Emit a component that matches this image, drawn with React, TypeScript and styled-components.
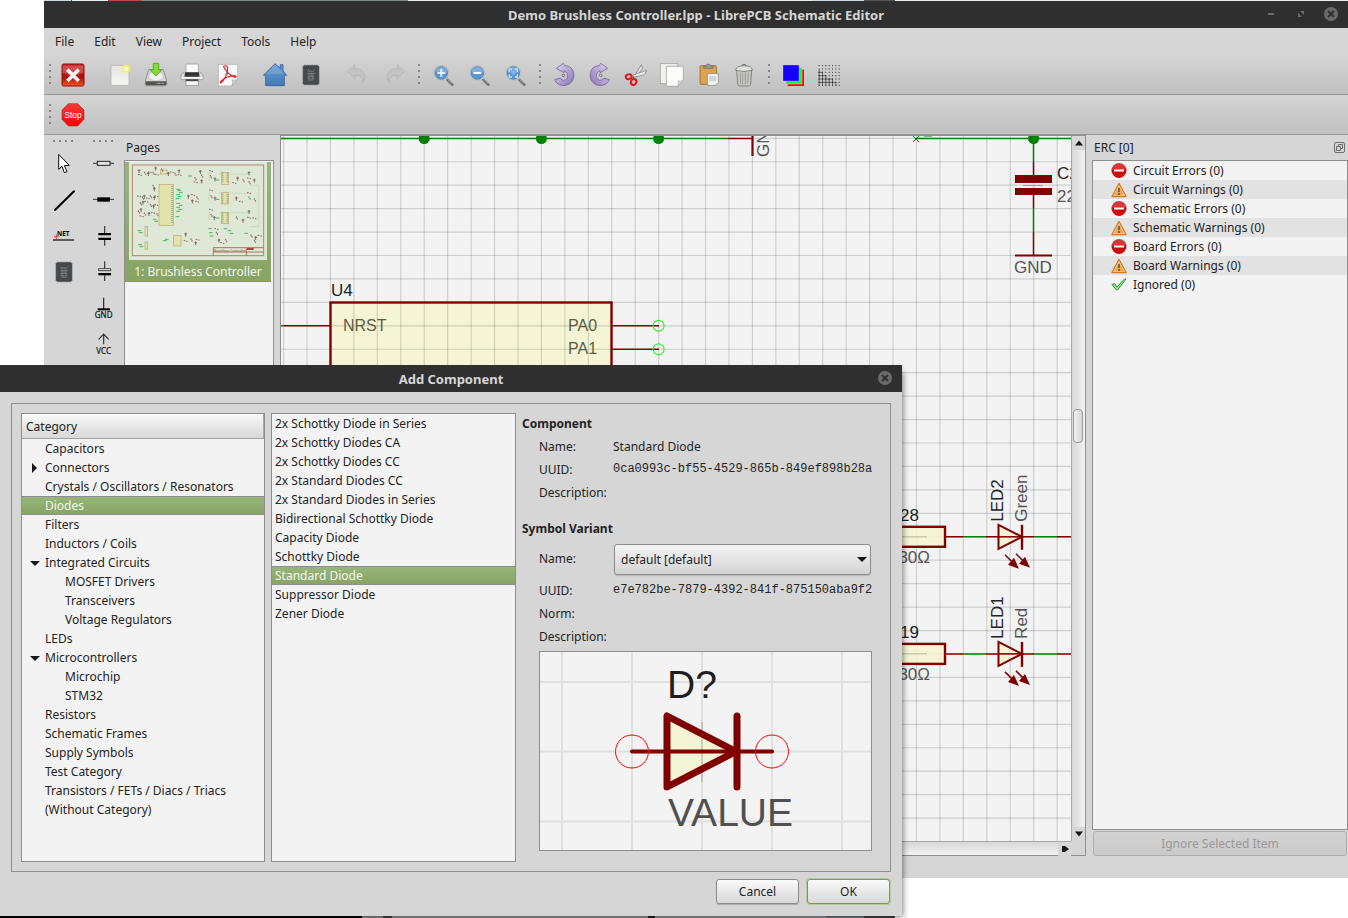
import React from "react";
import styled, { createGlobalStyle, css } from "styled-components";

const GlobalStyle = createGlobalStyle`
  * { box-sizing: border-box; }
  body {
    margin: 0;
    background: #ffffff;
    color: #232323;
    font-family: "Noto Sans", sans-serif;
    font-size: 12px;
    line-height: 19px;
  }
  button, select { font: inherit; color: inherit; }
  ul, ol, dl, dd, h1, h2, h3 { margin: 0; padding: 0; list-style: none; font-size: inherit; }
`;

const line = "#8e8e8e";
const face = "#d6d6d6";
const base = "#f3f3f3";
const maroon = "#800000";
const wire = "#008000";

const selected = css`
  color: #f4f8ee;
  background: linear-gradient(#98b67c, #87a465);
`;

/* ---------- desktop and windows ---------- */

const Desktop = styled.div`
  position: relative;
  min-height: 100vh;
  display: flex;
  flex-direction: column;
  overflow: hidden;
`;

const TopStrip = styled.div`
  height: 1px;
  margin-left: 44px;
  background: linear-gradient(90deg, #c9dbe0 0 27px, #1f5d73 27px 28px, #e8efee 28px 64px, #b05050 64px 98px, #7d8786 98px 364px, #e8efee 364px 768px, #c9dbe0 768px 820px, #555 820px 851px, #e8efee 851px);
`;

const BottomStrip = styled.div`
  position: absolute;
  left: 0;
  bottom: 0;
  width: 895px;
  height: 2px;
  background: linear-gradient(90deg, #000 0 362px, #8b8b8b 362px 383px, #444 383px 392px, #999 392px 648px, #222 648px 655px, #999 655px 826px, #6d7b85 826px 864px, #444 864px);
`;

const MainWindow = styled.main`
  flex: 1;
  display: flex;
  flex-direction: column;
  margin: 0 0 40px 44px;
  background: ${face};
`;

const TitleBar = styled.header`
  position: relative;
  height: 27px;
  padding-top: 2px;
  display: flex;
  align-items: center;
  justify-content: center;
  background: #2f2f2f;
  color: #d6d6d6;
  font-size: 13px;
  font-weight: 700;
`;

const WindowControls = styled.div`
  position: absolute;
  top: 4px;
  right: 8px;
  display: flex;
  gap: 12px;
`;

const ControlButton = styled.button`
  width: 18px;
  height: 18px;
  padding: 0;
  border: 0;
  background: none;
  display: grid;
  place-items: center;
`;

const MenuBar = styled.nav`
  display: flex;
  height: 28px;
  padding: 0 1px;
`;

const MenuItem = styled.button`
  height: 27px;
  padding: 0 10px;
  border: 0;
  background: none;
`;

const ToolBar = styled.div<{ $tall?: boolean }>`
  height: ${(p) => (p.$tall ? 40 : 39)}px;
  padding-top: ${(p) => (p.$tall ? 1 : 0)}px;
  display: flex;
  align-items: center;
  border-bottom: 1px solid #979797;
  background: linear-gradient(#d4d4d4, #c0c0c0);
`;

const Handle = styled.span<{ $inner?: boolean }>`
  width: ${(p) => (p.$inner ? 13 : 11)}px;
  height: 26px;
  background: radial-gradient(circle, #858585 1px, transparent 1px) center top / 4px 6px repeat-y;
`;

const Gap = styled.span`
  width: 11px;
`;

const ToolButton = styled.button`
  width: 36px;
  height: 36px;
  padding: 0;
  border: 0;
  background: none;
  display: grid;
  place-items: center;
`;

const Icon = styled.svg`
  display: block;
  width: 24px;
  height: 24px;
  overflow: visible;
`;

const Workspace = styled.div`
  flex: 1;
  display: flex;
  min-height: 0;
`;

const ToolColumn = styled.div`
  width: 40px;
  display: flex;
  flex-direction: column;
  align-items: center;
`;

const ColumnHandle = styled.span`
  width: 26px;
  height: 11px;
  background: radial-gradient(circle, #858585 1px, transparent 1px) left center / 6px 4px repeat-x;
`;

const Dock = styled.section<{ $width: number }>`
  width: ${(p) => p.$width}px;
  display: flex;
  flex-direction: column;
`;

const DockTitle = styled.h2`
  height: 25px;
  padding: 0 2px;
  display: flex;
  align-items: center;
  justify-content: space-between;
  font-weight: 400;
`;

const DockList = styled.ul`
  flex: 1;
  border: 1px solid ${line};
  background: ${base};
`;

const PageItem = styled.li`
  ${selected}
  margin: 1px 2px 0 0;
  padding: 0 4px;
  text-align: center;
  border-bottom: 1px solid ${line};
`;

const Thumbnail = styled.svg`
  display: block;
  width: 138px;
  height: 98px;
  margin-bottom: 2px;
  background: #dfe8d6;
`;

const ErcItem = styled.li`
  height: 19px;
  padding-left: 18px;
  display: flex;
  align-items: center;
  gap: 6px;
  &:nth-child(even) { background: #e2e2e2; }
`;

const SmallIcon = styled.svg`
  width: 16px;
  height: 16px;
`;

const IgnoreButton = styled.button`
  height: 25px;
  margin: 1px 1px 0;
  padding: 0;
  border: 1px solid #b0b0b0;
  border-radius: 3px;
  background: linear-gradient(#d2d2d2, #cacaca);
  color: #989898;
`;

const StatusBar = styled.footer`
  height: 22px;
`;

/* ---------- schematic view ---------- */

const View = styled.section`
  flex: 1;
  min-width: 0;
  margin: 0 6px;
  border: 1px solid ${line};
  display: grid;
  grid-template: minmax(0, 1fr) 14px / minmax(0, 1fr) 14px;
`;

const Scene = styled.div`
  position: relative;
  overflow: hidden;
  background: ${base};
`;

const SceneSvg = styled.svg`
  position: absolute;
  inset: 0;
  width: 100%;
  height: 100%;
  font-family: "Liberation Sans", sans-serif;
  font-size: 17px;
`;

const VScroll = styled.div`
  display: flex;
  flex-direction: column;
  border-left: 1px solid #a8a8a8;
  background: linear-gradient(90deg, #d8d8d8, #f3f3f3);
`;

const HScroll = styled.div`
  display: flex;
  justify-content: flex-end;
  border-top: 1px solid #a8a8a8;
  background: linear-gradient(#d8d8d8, #f3f3f3);
`;

const ArrowButton = styled.button`
  width: 13px;
  height: 14px;
  padding: 0;
  border: 0;
  background: ${face};
  display: grid;
  place-items: center;
`;

const Space = styled.span<{ $grow: number }>`
  flex: ${(p) => p.$grow} 1 0;
`;

const Thumb = styled.span`
  height: 34px;
  margin: 0 2px 0 1px;
  border: 1px solid #999;
  border-radius: 4px;
  background: linear-gradient(90deg, #f0f0f0, #d6d6d6);
`;

const Corner = styled.span`
  background: ${face};
`;

/* ---------- dialog ---------- */

const Dialog = styled.section`
  position: absolute;
  left: 0;
  top: 365px;
  width: 902px;
  background: ${face};
  box-shadow: 4px 4px 6px -3px rgba(0, 0, 0, 0.5);
`;

const DialogBody = styled.div`
  padding: 11px 11px 12px;
`;

const Group = styled.div`
  display: grid;
  grid-template-columns: 244px 245px 1fr;
  gap: 6px;
  padding: 9px;
  border: 1px solid ${line};
`;

const ListPanel = styled.div`
  min-height: 449px;
  border: 1px solid ${line};
  background: ${base};
`;

const TreeHeader = styled.div`
  height: 25px;
  padding: 3px 4px 0;
  border-right: 1px solid #a8a8a8;
  border-bottom: 1px solid #a0a0a0;
  background: linear-gradient(#fafafa, #d8d8d8);
`;

const Row = styled.li<{ $indent: number; $on?: boolean }>`
  height: 19px;
  display: flex;
  align-items: center;
  padding-left: ${(p) => p.$indent}px;
  white-space: nowrap;
  ${(p) => p.$on && css`
    ${selected}
    box-shadow: inset 0 1px ${line}, inset 0 -1px ${line};
  `}
`;

const Expander = styled.svg`
  width: 10px;
  height: 10px;
  margin: 0 5px 0 -15px;
`;

const Details = styled.div`
  padding-right: 9px;
`;

const SectionTitle = styled.h3<{ $second?: boolean }>`
  height: 22px;
  padding-top: 1px;
  margin-top: ${(p) => (p.$second ? 14 : 0)}px;
  font-weight: 700;
`;

const Field = styled.div<{ $tall?: boolean }>`
  height: ${(p) => (p.$tall ? 39 : 23)}px;
  padding-left: 17px;
  display: grid;
  grid-template-columns: 74px 1fr;
  align-items: center;
  white-space: nowrap;
  label { padding-bottom: 3px; }
`;

const Uuid = styled.span`
  height: 19px;
  font-family: "Liberation Mono", monospace;
`;

const SelectBox = styled.div`
  position: relative;
  height: 31px;
  margin: 0 1px;
  svg { position: absolute; right: 4px; top: 13px; pointer-events: none; }
`;

const Select = styled.select`
  display: block;
  width: 100%;
  height: 31px;
  padding: 0 6px;
  appearance: none;
  border: 1px solid #8c8c8c;
  border-radius: 3px;
  background: linear-gradient(#f4f4f4, #d4d4d4);
  box-shadow: 0 1px 1px rgba(0, 0, 0, 0.15);
`;

const Preview = styled.svg`
  display: block;
  width: 333px;
  height: 200px;
  margin: 3px 0 0 17px;
  border: 1px solid ${line};
  background: ${base};
  font-family: "Liberation Sans", sans-serif;
  font-size: 39px;
`;

const DialogButtons = styled.div`
  display: flex;
  justify-content: flex-end;
  gap: 8px;
  margin-top: 7px;
  padding-right: 1px;
`;

const PushButton = styled.button<{ $primary?: boolean }>`
  width: 83px;
  height: 25px;
  padding: 0;
  border: 1px solid ${(p) => (p.$primary ? "#7f9468" : "#8c8c8c")};
  border-radius: 3px;
  background: linear-gradient(#fafafa, #d8d8d8);
  box-shadow: ${(p) => (p.$primary ? "0 0 0 1px #b4cc9c" : "0 1px 1px rgba(0,0,0,.2)")};
`;

/* ---------- icons, drawn on a 72 unit square ---------- */

const ChipArt = () => (
  <>
    <path d="M16 4v64M21 4v64M26 4v64M31 4v64M36 4v64M41 4v64M46 4v64M51 4v64M56 4v64M9 12h54M9 18h54M9 24h54M9 30h54M9 36h54M9 42h54M9 48h54M9 54h54M9 60h54" stroke="#7d868f" strokeWidth="1.6" />
    <rect x="13" y="8" width="46" height="56" rx="3" fill="#454a4b" stroke="#33383a" strokeWidth="2" />
    <path d="M25 24q4-6 5 0t5-1l5 3 6-5M25 31h22M27 36h18M25 41h20M26 46h9M38 46h8M28 51h16" fill="none" stroke="#a3a8a8" strokeWidth="1.8" />
  </>
);

const Lens = ({ children }: { children: React.ReactNode }) => (
  <>
    <path d="M49 50L64 65" stroke="#6c6e68" strokeWidth="8" strokeLinecap="round" />
    <path d="M50 49L63 61" stroke="#b3b5ae" strokeWidth="3" strokeLinecap="round" />
    <circle cx="31" cy="30" r="22" fill="#5a92d4" stroke="#bfc2bb" strokeWidth="5" />
    <path d="M12 26a20 20 0 0 1 38 0q-18 8-38 0z" fill="#9cc0ea" opacity=".6" />
    <circle cx="31" cy="30" r="19" fill="none" stroke="#4a7cb8" strokeWidth="1.5" />
    {children}
  </>
);

const Rotate = () => (
  <>
    <path d="M38 8C58 8 68 24 65 42C62 62 44 70 29 67C18 65 11 58 8 50L25 45C29 53 39 54 44 47C50 38 46 26 36 24L36 29L13 16L34 1z" fill="url(#purple)" stroke="#65518c" strokeWidth="2" />
    <circle cx="34" cy="37" r="4" fill="#e9e2f5" stroke="#65518c" strokeWidth="2.5" />
  </>
);

const icons: Record<string, React.ReactNode> = {
  close: (
    <>
      <rect x="3" y="3" width="66" height="66" rx="5" fill="url(#closeRed)" stroke="#8a1010" strokeWidth="3" />
      <path d="M5 8h62v22Q36 42 5 30z" fill="#fff" opacity=".22" />
      <path d="M19 20L53 54M53 20L19 54" stroke="#f4f4f4" strokeWidth="11" />
    </>
  ),
  new: (
    <>
      <rect x="9" y="7" width="54" height="60" rx="3" fill="url(#paper)" stroke="#b5b5ad" strokeWidth="2.5" />
      <circle cx="55" cy="17" r="13" fill="#f8f06a" opacity=".75" />
      <path d="M55 6l3 7 8 1-6 5 2 8-7-4-7 4 2-8-6-5 8-1z" fill="#fffef0" stroke="#efe23a" strokeWidth="1.5" />
    </>
  ),
  save: (
    <>
      <path d="M14 20h44L68 54v10q0 4-4 4H8q-4 0-4-4V54z" fill="#d4d5d2" stroke="#858783" strokeWidth="2.5" />
      <ellipse cx="36" cy="40" rx="22" ry="13" fill="#efefed" stroke="#bbb" strokeWidth="1.5" />
      <path d="M5 55h62v8q0 4-4 4H9q-4 0-4-4z" fill="#50534f" />
      <path d="M38 61h24" stroke="#c4c6c2" strokeWidth="4" strokeDasharray="2 2" />
      <path d="M28 1h16v19h10L36 39 18 20h10z" fill="#84dd37" stroke="#4fa30c" strokeWidth="2.5" />
    </>
  ),
  print: (
    <>
      <rect x="18" y="3" width="37" height="29" fill="#fafafa" stroke="#a2a2a2" strokeWidth="2.5" />
      <path d="M3 36q0-6 6-6h54q6 0 6 6v14H3z" fill="#dcdedb" stroke="#858783" strokeWidth="2" />
      <path d="M16 28h40l3 13H13z" fill="#323533" />
      <path d="M4 45h64" stroke="#f7f7f7" strokeWidth="4" />
      <path d="M17 49h38v8H17z" fill="#30332f" />
      <rect x="18" y="54" width="37" height="14" fill="#f3f3f3" stroke="#858783" strokeWidth="2" />
    </>
  ),
  pdf: (
    <>
      <path d="M7 4h58v45L47 69H7z" fill="#f9f9f9" stroke="#b4b4b4" strokeWidth="2.5" />
      <path d="M47 69q5-8 1-19 9 4 17-1z" fill="#d0d0d0" stroke="#999" strokeWidth="1.5" />
      <path d="M22 10q10-5 13 4Q36 36 17 58q-6 5-3-2Q30 39 57 38q8 4-1 5Q34 34 22 10" fill="none" stroke="#e02129" strokeWidth="3.500" />
    </>
  ),
  home: (
    <>
      <path d="M36 2L52 16V5h8v19l11 13h-7v31H8V37H1z" fill="url(#homeBlue)" stroke="#335f97" strokeWidth="2.5" strokeLinejoin="round" />
      <path d="M36 6L9 33h54z" fill="#fff" opacity=".13" />
    </>
  ),
  chip: <ChipArt />,
  undo: <path d="M4 25L26 6v11c27-2 39 20 24 43q6-22-24-24v10z" fill="#c4c4c4" stroke="#b0b0b0" strokeWidth="2" />,
  redo: <path d="M68 25L46 6v11C19 15 7 37 22 60q-6-22 24-24v10z" fill="#c4c4c4" stroke="#b0b0b0" strokeWidth="2" />,
  zoomIn: <Lens><path d="M31 18v24M19 30h24" stroke="#fff" strokeWidth="5" /></Lens>,
  zoomOut: <Lens><path d="M19 30h24" stroke="#fff" strokeWidth="6" /></Lens>,
  zoomFit: <Lens><path d="M19 26v-8h8M35 18h8v8M43 34v8h-8M27 42h-8v-8" fill="none" stroke="#c4dbf6" strokeWidth="4" /><path d="M26 25h10v10H26z" fill="#86b1e4" /></Lens>,
  rotateLeft: <Rotate />,
  rotateRight: <g transform="translate(72 0) scale(-1 1)"><Rotate /></g>,
  cut: (
    <>
      <path d="M52 5L26 48l5 2L56 16z" fill="#dcdedb" stroke="#777" strokeWidth="2" />
      <path d="M68 22L23 38l2 6 36-9z" fill="#f0f0ee" stroke="#777" strokeWidth="2" />
      <ellipse cx="14" cy="41" rx="9" ry="7" fill="none" stroke="#d91a1a" strokeWidth="6" transform="rotate(-15 14 41)" />
      <ellipse cx="29" cy="57" rx="8" ry="9" fill="none" stroke="#d91a1a" strokeWidth="6" transform="rotate(25 29 57)" />
      <circle cx="29" cy="42" r="2" fill="#444" />
    </>
  ),
  copy: (
    <>
      <rect x="1" y="2" width="52" height="60" fill="#f3f3f1" stroke="#a5a5a0" strokeWidth="2.5" />
      <path d="M19 10h51v42L53 70H19z" fill="#fbfbfa" stroke="#a5a5a0" strokeWidth="2.5" />
      <path d="M53 70q4-8 1-16 9 2 16-2z" fill="#ddd" stroke="#a5a5a0" strokeWidth="2" />
    </>
  ),
  paste: (
    <>
      <rect x="12" y="8" width="49" height="56" rx="3" fill="#daa251" stroke="#9a6a22" strokeWidth="2.5" />
      <path d="M23 16v-7h8q0-6 6-6t6 6h8v7z" fill="#9b9d98" stroke="#666862" strokeWidth="2" />
      <path d="M34 32h33v26l-9 9H34z" fill="#f5f5f3" stroke="#8f908b" strokeWidth="2.5" />
      <path d="M40 39h21v16H40z" fill="#d3d4d1" />
    </>
  ),
  trash: (
    <>
      <path d="M14 20h45l-3 44q-1 5-8 5H25q-7 0-8-5z" fill="#c6c8c3" stroke="#73756f" strokeWidth="2.5" />
      <path d="M24 28l2 35M32 28v37M40 28v37M49 28l-2 35" stroke="#90928c" strokeWidth="2.500" />
      <path d="M11 22q0-13 25-14 25 1 25 14-25 7-50 0z" fill="#dfe1dc" stroke="#73756f" strokeWidth="2.5" />
      <path d="M30 8q6-8 12 0" fill="none" stroke="#73756f" strokeWidth="4" />
    </>
  ),
  layers: (
    <>
      <rect x="20" y="20" width="49" height="49" fill="#ff0000" />
      <rect x="13" y="13" width="50" height="50" fill="#00ff22" stroke="#e8d8e8" strokeWidth="1.5" />
      <rect x="6" y="6" width="48" height="48" fill="#1600ff" stroke="#d5cfe8" strokeWidth="1" />
    </>
  ),
  grid: (
    <>
      <path d="M5 8h63M5 18h63M5 28h63M5 38h63M5 48h63M5 58h63M5 67h63" stroke="#2a2a2a" strokeWidth="3" strokeDasharray="3 7" />
      <path d="M6.500 20v48M16.500 26v42M26.500 38v30M36.500 46v22M46.500 48v20M56.500 58v10M4 28h14M4 38h24M4 48h44M4 58h54" stroke="#2a2a2a" strokeWidth="1.800" />
    </>
  ),
  stop: (
    <>
      <path d="M22 2h28l19 19v28L50 69H22L3 49V21z" fill="url(#stopRed)" stroke="#a33" strokeWidth="2" />
      <text x="36" y="45" textAnchor="middle" fontSize="25" fill="#fff" fontFamily="Liberation Sans, sans-serif">Stop</text>
    </>
  ),
  pointer: <path d="M20 7v45l10-9 7 19 8-3-8-18 15-1z" fill="#fff" stroke="#111" strokeWidth="3" />,
  drawWire: <path d="M9 66L66 10" stroke="#000" strokeWidth="6" strokeLinecap="round" />,
  net: (
    <>
      <text x="15" y="36" fontSize="19" fontWeight="700" fill="#000">NET</text>
      <path d="M3 48h63" stroke="#444" strokeWidth="5" />
      <path d="M13 31v15M6 38h14" stroke="#f22" strokeWidth="2.5" />
    </>
  ),
  resistor: (
    <>
      <path d="M3 34h63" stroke="#333" strokeWidth="3" />
      <rect x="16" y="28" width="38" height="12" fill="#e3e3e3" stroke="#222" strokeWidth="3" />
    </>
  ),
  inductor: (
    <>
      <path d="M3 34h63" stroke="#333" strokeWidth="3" />
      <path d="M16 28h38v13H16z" fill="#000" />
    </>
  ),
  capacitor: (
    <>
      <path d="M38 6v22M38 46v19" stroke="#333" strokeWidth="3.5" />
      <path d="M19 27h38v7H19zM19 41h38v7H19z" fill="#000" />
    </>
  ),
  polarCapacitor: (
    <>
      <path d="M38 4v22M38 46v17" stroke="#333" strokeWidth="3.5" />
      <path d="M20 26h36v6H20z" fill="#eee" stroke="#222" strokeWidth="2.5" />
      <path d="M19 39h38v7H19z" fill="#000" />
    </>
  ),
  gnd: (
    <>
      <path d="M35 5v34" stroke="#222" strokeWidth="3.5" />
      <path d="M17 37h37v6H17z" fill="#000" />
      <text x="35" y="65" textAnchor="middle" fontSize="24" fill="#111" stroke="#111" strokeWidth=".6">GND</text>
    </>
  ),
  vcc: (
    <>
      <path d="M35 37V7M20 22L35 6l15 16" fill="none" stroke="#333" strokeWidth="3.5" />
      <text x="35" y="65" textAnchor="middle" fontSize="24" fill="#111" stroke="#111" strokeWidth=".6">VCC</text>
    </>
  ),
};

const GradientDefs = styled.svg`
  position: absolute;
  width: 0;
  height: 0;
`;

const Gradients = () => (
  <GradientDefs aria-hidden="true">
    <defs>
      <linearGradient id="closeRed" x2="0" y2="1"><stop stopColor="#c22" /><stop offset=".6" stopColor="#b00c0c" /><stop offset="1" stopColor="#f0561c" /></linearGradient>
      <linearGradient id="stopRed" x2="0" y2="1"><stop stopColor="#f43a3a" /><stop offset="1" stopColor="#f00" /></linearGradient>
      <linearGradient id="paper" x2="0" y2="1"><stop stopColor="#e4e5e1" /><stop offset="1" stopColor="#f6f6f4" /></linearGradient>
      <linearGradient id="homeBlue" x2="0" y2="1"><stop stopColor="#6b9ed6" /><stop offset="1" stopColor="#4479b8" /></linearGradient>
      <linearGradient id="purple" x2="1" y2="1"><stop stopColor="#e2d8f2" /><stop offset="1" stopColor="#8a74b6" /></linearGradient>
    </defs>
  </GradientDefs>
);

const Tool = ({ name }: { name: string }) => (
  <ToolButton type="button" aria-label={name}>
    <Icon viewBox="0 0 72 72">{icons[name]}</Icon>
  </ToolButton>
);

const CloseControl = () => (
  <ControlButton type="button" aria-label="close window">
    <svg width="14" height="14" viewBox="0 0 14 14">
      <circle cx="7" cy="7" r="7" fill="#6a6a6a" />
      <path d="M4 4l6 6M10 4l-6 6" stroke="#2f2f2f" strokeWidth="1.8" />
    </svg>
  </ControlButton>
);

/* ---------- page thumbnail ---------- */

const marks = [
  [30, 27], [33, 38], [47, 34], [58, 36], [62, 30], [72, 34], [80, 20], [84, 37], [98, 24], [118, 36], [128, 30], [138, 37], [150, 28], [152, 38],
  [72, 73], [76, 82], [30, 102], [40, 108], [46, 104], [56, 108], [64, 104], [76, 108], [82, 102], [34, 125], [42, 122], [52, 118], [64, 130], [74, 134], [82, 128],
  [28, 150], [36, 144], [38, 162], [46, 156], [60, 156], [72, 152], [84, 158], [178, 104], [192, 98], [204, 108], [190, 118], [204, 118],
  [198, 50], [214, 30], [200, 60], [218, 42], [218, 58], [246, 26], [244, 44], [258, 52], [246, 84], [246, 104], [258, 110],
  [246, 142], [246, 160], [256, 168], [262, 200], [262, 214], [270, 236], [280, 242], [290, 236], [360, 34], [360, 48], [360, 62],
  [326, 50], [316, 62], [342, 56], [376, 56], [360, 92], [360, 108], [322, 110], [336, 118], [376, 114], [360, 150], [360, 166],
  [322, 168], [342, 176], [376, 168], [366, 222], [380, 228], [392, 220], [376, 238], [170, 218], [170, 236], [186, 234], [200, 244], [206, 232],
];
const greens = [
  [146, 82], [150, 86], [154, 92], [146, 98], [150, 104], [144, 110], [146, 124], [154, 130], [146, 136], [152, 142], [146, 148], [144, 164],
  [76, 172], [80, 178], [30, 206], [34, 212], [32, 248], [36, 254], [106, 236], [112, 232], [182, 42], [264, 54], [264, 112],
  [264, 168], [242, 200], [244, 212], [246, 222], [288, 200], [300, 206], [306, 214], [350, 214],
];

const PageThumbnail = () => (
  <Thumbnail viewBox="0 0 414 294" aria-label="Page preview">
    <rect x="10" y="9" width="394" height="272" fill="none" stroke="#a98873" strokeWidth="3" />
    <path d="M270 36h92M270 94h92M270 152h92M362 70h27v124h-27M240 30v28M240 88v28M240 146v28" fill="none" stroke="#bdd2b2" strokeWidth="2" />
    <g fill="#e0e4ac" stroke="#b9a479" strokeWidth="2">
      <rect x="90" y="67" width="44" height="123" />
      <rect x="94" y="24" width="20" height="12" />
      <rect x="277" y="31" width="22" height="36" />
      <rect x="277" y="92" width="22" height="34" />
      <rect x="277" y="151" width="22" height="34" />
      <rect x="134" y="220" width="22" height="32" />
      <rect x="48" y="194" width="8" height="28" />
      <rect x="48" y="240" width="8" height="22" />
    </g>
    <path d="M129 72v114M281 34v30M295 34v30M281 95v28M295 95v28M281 154v28M295 154v28" stroke="#94917a" strokeWidth="4" strokeDasharray="3 3" />
    {marks.map(([x, y], i) => (
      <path
        key={`${x}-${y}`}
        d={i % 3 === 0 ? `M${x - 4} ${y - 2}h8M${x} ${y - 6}v12` : i % 3 === 1 ? `M${x - 6} ${y}h5M${x + 2} ${y + 2}h4` : `M${x} ${y - 5}v5M${x + 3} ${y}v5`}
        stroke={i % 2 ? "#7c3f38" : "#5d5348"}
        strokeWidth="3"
        opacity=".8"
      />
    ))}
    {greens.map(([x, y]) => <path key={`${x}-${y}`} d={`M${x - 4} ${y}h11`} stroke="#4bb558" strokeWidth="3" />)}
    <path d="M253 281v-24h151M253 270h151M352 257v24" fill="none" stroke="#97604c" strokeWidth="2.5" />
    <path d="M354 258h20v6h-20z" fill="#98503c" />
    <text x="255" y="269" fontSize="10" fill="#8a4a3a">Brushless Controller</text>
  </Thumbnail>
);

/* ---------- schematic ---------- */

const pitch = 23.44;
const columns = Array.from({ length: 60 }, (_, i) => 283.6 + i * pitch);
const rows = Array.from({ length: 50 }, (_, i) => 138.3 + i * pitch);

const Led = ({ y, name, color, part }: { y: number; name: string; color: string; part: string }) => (
  <g transform={`translate(0 ${y})`}>
    <rect x="860" y="-10" width="85" height="20" fill="#f4f4cf" fillOpacity=".85" stroke={maroon} strokeWidth="2.400" />
    <path d="M880 0h47" stroke="#b9b99a" />
    <path d="M946 0h17M986 0h48M1057 0h80" stroke={maroon} strokeWidth="1.500" />
    <path d="M963 0h23M1034 0h23" stroke={wire} strokeWidth="1.500" />
    <path d="M998.500 -12v24L1022 0z" fill="#f4f4cf" fillOpacity=".8" stroke={maroon} strokeWidth="2" />
    <path d="M1022 -12v25" stroke={maroon} strokeWidth="2.400" />
    <path d="M998 0h24" stroke={maroon} strokeWidth="1.500" />
    <path d="M1005 18l8 8M1016 17l8 8" stroke={maroon} strokeWidth="1.500" />
    <path d="M1019 32l-11-4 6-7zM1030 31l-11-4 6-7z" fill={maroon} />
    <text x="919" y="-16" textAnchor="end">{part}</text>
    <text x="930" y="26" textAnchor="end" fill="#555">330Ω</text>
    <text transform="translate(1003 -15) rotate(-90)">{name}</text>
    <text transform="translate(1027 -15) rotate(-90)" fill="#555">{color}</text>
  </g>
);

const Schematic = () => (
  <SceneSvg aria-label="Schematic" fill="#232323">
    <g transform="translate(-281 -136)">
      <rect x="330.500" y="302.500" width="281" height="500" fill="#f5f5d5" />
      <g stroke="#000" strokeOpacity=".15" strokeWidth="1.200">
        {columns.map((x) => <path key={x} d={`M${x} 136v1200`} />)}
        {rows.map((y) => <path key={y} d={`M281 ${y}h1400`} />)}
      </g>
      <rect x="330.500" y="302.500" width="281" height="500" fill="none" stroke={maroon} strokeWidth="2.400" />
      <path d="M281 138.500h447M916 138.500h300M1033.500 138v24M1033.500 208v24M281 325.800h3" stroke={wire} strokeWidth="1.500" />
      <path d="M913 136l6 6M919 136l-6 6M924 136h8" stroke={wire} />
      <g fill={wire}>
        {[424.2, 541.4, 658.6, 1033.6].map((x) => <circle key={x} cx={x} cy="138.500" r="5.500" />)}
      </g>
      <path d="M728 138.500h24M284 325.800h46M612 325.800h47M612 349.300h47M1033.500 162v14M1033.500 195v13M1033.500 232v23" stroke={maroon} strokeWidth="1.500" />
      <path d="M752.500 130v26M1015 255.500h37" stroke={maroon} strokeWidth="2.200" />
      <path d="M1015 175h37v8h-37zM1015 188h37v7h-37z" fill={maroon} />
      <path d="M1023 185.500h20" stroke="#999" />
      <g fill="none" stroke="#2bf02b" strokeWidth="1.200">
        <circle cx="658.600" cy="325.800" r="5.500" />
        <circle cx="658.600" cy="349.300" r="5.500" />
      </g>
      <text x="331" y="296">U4</text>
      <text x="274" y="360" fontSize="12">F</text>
      <g fill="#5c5c45">
        <text x="343" y="331" fontSize="16">NRST</text>
        <text x="568" y="331" fontSize="16">PA0</text>
        <text x="568" y="354" fontSize="16">PA1</text>
      </g>
      <text transform="translate(769 157) rotate(-90)" fill="#555">GND</text>
      <text x="1057" y="179">C2</text>
      <text x="1057" y="202" fill="#555">22</text>
      <text x="1033" y="273" textAnchor="middle" fill="#555">GND</text>
      <Led y={536.8} part="R28" name="LED2" color="Green" />
      <Led y={653.9} part="R19" name="LED1" color="Red" />
    </g>
  </SceneSvg>
);

const Triangle = ({ dir }: { dir: "up" | "down" | "right" }) => (
  <svg width="8" height="8" viewBox="0 0 8 8">
    <path d={{ up: "M0 6.500h8L4 1.500z", down: "M0 1.500h8L4 6.500z", right: "M1 1v6h3l4-3-4-3z" }[dir]} fill="#161616" />
  </svg>
);

/* ---------- lists ---------- */

const ErcIcon = ({ kind }: { kind: string }) => (
  <SmallIcon viewBox="0 0 16 16">
    {kind === "error" && <><circle cx="8" cy="7.500" r="7.500" fill="#cc0d10" /><path d="M1 6.500a7 7 0 0 1 14 0z" fill="#fff" opacity=".18" /><path d="M3 6.500h10v2H3z" fill="#fff" /></>}
    {kind === "warning" && <><path d="M8 1.500L15 14.500H1z" fill="#f6a44b" stroke="#d27a1c" strokeWidth="1.400" strokeLinejoin="round" /><path d="M8 3.500L13.500 13.500h-11z" fill="none" stroke="#fbd3a0" strokeWidth=".7" /><path d="M7 6h2v4H7zM7 11h2v2H7z" fill="#77684f" /></>}
    {kind === "ok" && <path d="M1 7.500l2.500-1L6 10l7.500-8h1.500L6.500 13H5.500z" fill="#9be88c" stroke="#2c9a2c" strokeWidth="1" />}
  </SmallIcon>
);

const ercItems = [
  ["error", "Circuit Errors (0)"],
  ["warning", "Circuit Warnings (0)"],
  ["error", "Schematic Errors (0)"],
  ["warning", "Schematic Warnings (0)"],
  ["error", "Board Errors (0)"],
  ["warning", "Board Warnings (0)"],
  ["ok", "Ignored (0)"],
];

const categories: { label: string; child?: boolean; state?: "open" | "closed" }[] = [
  { label: "Capacitors" },
  { label: "Connectors", state: "closed" },
  { label: "Crystals / Oscillators / Resonators" },
  { label: "Diodes" },
  { label: "Filters" },
  { label: "Inductors / Coils" },
  { label: "Integrated Circuits", state: "open" },
  { label: "MOSFET Drivers", child: true },
  { label: "Transceivers", child: true },
  { label: "Voltage Regulators", child: true },
  { label: "LEDs" },
  { label: "Microcontrollers", state: "open" },
  { label: "Microchip", child: true },
  { label: "STM32", child: true },
  { label: "Resistors" },
  { label: "Schematic Frames" },
  { label: "Supply Symbols" },
  { label: "Test Category" },
  { label: "Transistors / FETs / Diacs / Triacs" },
  { label: "(Without Category)" },
];

const components = [
  "2x Schottky Diode in Series",
  "2x Schottky Diodes CA",
  "2x Schottky Diodes CC",
  "2x Standard Diodes CC",
  "2x Standard Diodes in Series",
  "Bidirectional Schottky Diode",
  "Capacity Diode",
  "Schottky Diode",
  "Standard Diode",
  "Suppressor Diode",
  "Zener Diode",
];

const AddComponentDialog = () => (
  <Dialog role="dialog" aria-labelledby="dialog-title">
    <TitleBar>
      <span id="dialog-title">Add Component</span>
      <WindowControls><CloseControl /></WindowControls>
    </TitleBar>
    <DialogBody>
      <Group>
        <ListPanel>
          <TreeHeader>Category</TreeHeader>
          <ul role="tree">
            {categories.map(({ label, child, state }) => (
              <Row key={label} role="treeitem" $indent={child ? 43 : 23} $on={label === "Diodes"} aria-selected={label === "Diodes"}>
                {state && (
                  <Expander viewBox="0 0 10 10">
                    <path d={state === "open" ? "M0 3h10L5 8z" : "M2 0l5 5-5 5z"} fill="#161616" />
                  </Expander>
                )}
                {label}
              </Row>
            ))}
          </ul>
        </ListPanel>
        <ListPanel>
          <ul role="listbox" aria-label="Components">
            {components.map((label) => (
              <Row key={label} role="option" $indent={3} $on={label === "Standard Diode"} aria-selected={label === "Standard Diode"}>
                {label}
              </Row>
            ))}
          </ul>
        </ListPanel>
        <Details>
          <SectionTitle>Component</SectionTitle>
          <Field><span>Name:</span><span>Standard Diode</span></Field>
          <Field><span>UUID:</span><Uuid>0ca0993c-bf55-4529-865b-849ef898b28a</Uuid></Field>
          <Field><span>Description:</span></Field>
          <SectionTitle $second>Symbol Variant</SectionTitle>
          <Field $tall>
            <label htmlFor="variant">Name:</label>
            <SelectBox>
              <Select id="variant" defaultValue="default">
                <option value="default">default [default]</option>
              </Select>
              <svg width="10" height="6" viewBox="0 0 10 6"><path d="M0 0h10L5 5z" fill="#161616" /></svg>
            </SelectBox>
          </Field>
          <Field><span>UUID:</span><Uuid>e7e782be-7879-4392-841f-875150aba9f2</Uuid></Field>
          <Field><span>Norm:</span></Field>
          <Field><span>Description:</span></Field>
          <Preview aria-label="Symbol preview">
            <path d="M22 0v200M92 0v200M162 0v200M232 0v200M302 0v200M0 30h333M0 99.500h333M0 169.500h333" stroke="#e0e0e0" strokeWidth="2" />
            <path d="M127 64v71l69-35.500z" fill="#f4f4d7" />
            <path d="M162 70v60" stroke="#555" strokeOpacity=".3" strokeWidth="1.500" />
            <path d="M127 64v71l69-35.500zM197 64v71" fill="none" stroke={maroon} strokeWidth="7" strokeLinecap="round" strokeLinejoin="round" />
            <path d="M92 99.500h140" stroke={maroon} strokeWidth="4" strokeLinecap="round" />
            <circle cx="92" cy="99.500" r="16.500" fill="none" stroke="#f00" />
            <circle cx="232" cy="99.500" r="16.500" fill="none" stroke="#f00" />
            <text x="127" y="46" fill="#1e1e1e">D?</text>
            <text x="128" y="174" fill="#505050">VALUE</text>
          </Preview>
        </Details>
      </Group>
      <DialogButtons>
        <PushButton type="button">Cancel</PushButton>
        <PushButton type="submit" $primary>OK</PushButton>
      </DialogButtons>
    </DialogBody>
  </Dialog>
);

export default function App() {
  return (
    <Desktop>
      <GlobalStyle />
      <Gradients />
      <TopStrip />
      <MainWindow>
        <TitleBar>
          <span>Demo Brushless Controller.lpp - LibrePCB Schematic Editor</span>
          <WindowControls>
            <ControlButton type="button" aria-label="minimize">
              <svg width="6" height="2"><rect width="6" height="2" fill="#6a6a6a" /></svg>
            </ControlButton>
            <ControlButton type="button" aria-label="maximize">
              <svg width="6" height="6" viewBox="0 0 6 6"><path d="M2 0h4v4zM0 2l4 4H0z" fill="#6a6a6a" /></svg>
            </ControlButton>
            <CloseControl />
          </WindowControls>
        </TitleBar>
        <MenuBar>
          {["File", "Edit", "View", "Project", "Tools", "Help"].map((m) => <MenuItem key={m} type="button">{m}</MenuItem>)}
        </MenuBar>
        <ToolBar role="toolbar">
          <Handle />
          <Tool name="close" />
          <Gap />
          {["new", "save", "print", "pdf"].map((n) => <Tool key={n} name={n} />)}
          <Gap />
          {["home", "chip"].map((n) => <Tool key={n} name={n} />)}
          <Gap />
          {["undo", "redo"].map((n) => <Tool key={n} name={n} />)}
          <Handle $inner />
          {["zoomIn", "zoomOut", "zoomFit"].map((n) => <Tool key={n} name={n} />)}
          <Handle $inner />
          {["rotateLeft", "rotateRight", "cut", "copy", "paste", "trash"].map((n) => <Tool key={n} name={n} />)}
          <Handle $inner />
          {["layers", "grid"].map((n) => <Tool key={n} name={n} />)}
        </ToolBar>
        <ToolBar role="toolbar" $tall>
          <Handle />
          <Tool name="stop" />
        </ToolBar>
        <Workspace>
          <ToolColumn>
            <ColumnHandle />
            {["pointer", "drawWire", "net", "chip"].map((n) => <Tool key={n} name={n} />)}
          </ToolColumn>
          <ToolColumn>
            <ColumnHandle />
            {["resistor", "inductor", "capacitor", "polarCapacitor", "gnd", "vcc"].map((n) => <Tool key={n} name={n} />)}
          </ToolColumn>
          <Dock $width={150}>
            <DockTitle>Pages</DockTitle>
            <DockList>
              <PageItem>
                <PageThumbnail />
                1: Brushless Controller
              </PageItem>
            </DockList>
          </Dock>
          <View>
            <Scene><Schematic /></Scene>
            <VScroll>
              <ArrowButton type="button" aria-label="scroll up"><Triangle dir="up" /></ArrowButton>
              <Space $grow={259} />
              <Thumb />
              <Space $grow={384} />
              <ArrowButton type="button" aria-label="scroll down"><Triangle dir="down" /></ArrowButton>
            </VScroll>
            <HScroll>
              <ArrowButton type="button" aria-label="scroll right"><Triangle dir="right" /></ArrowButton>
            </HScroll>
            <Corner />
          </View>
          <Dock $width={256}>
            <DockTitle>
              ERC [0]
              <svg width="13" height="13" viewBox="0 0 13 13" fill="none" stroke="#6e6e6e">
                <rect x="1.500" y="1.500" width="10" height="10" rx="1.500" />
                <path d="M5.500 5.500v-2h4v4h-2M3.500 5.500h4v4h-4z" />
              </svg>
            </DockTitle>
            <DockList>
              {ercItems.map(([kind, label]) => <ErcItem key={label}><ErcIcon kind={kind} />{label}</ErcItem>)}
            </DockList>
            <IgnoreButton type="button" disabled>Ignore Selected Item</IgnoreButton>
          </Dock>
        </Workspace>
        <StatusBar />
      </MainWindow>
      <BottomStrip />
      <AddComponentDialog />
    </Desktop>
  );
}
